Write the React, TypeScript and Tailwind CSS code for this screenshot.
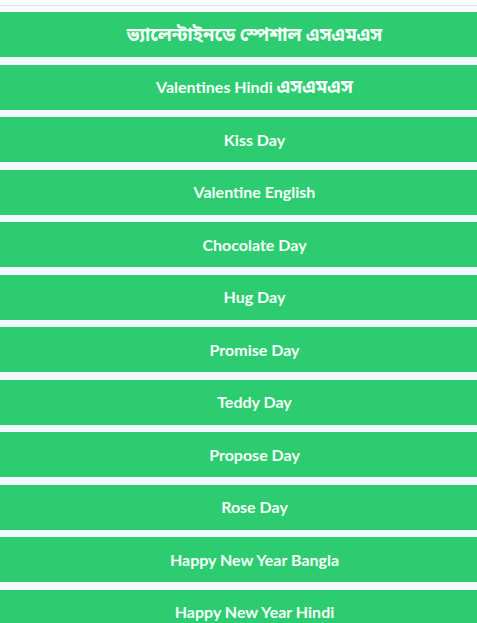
const items: { en?: string; bn?: string }[] = [
  { bn: 'ভ্যালেন্টাইনডে স্পেশাল এসএমএস' },
  { en: 'Valentines Hindi ', bn: 'এসএমএস' },
  { en: 'Kiss Day' },
  { en: 'Valentine English' },
  { en: 'Chocolate Day' },
  { en: 'Hug Day' },
  { en: 'Promise Day' },
  { en: 'Teddy Day' },
  { en: 'Propose Day' },
  { en: 'Rose Day' },
  { en: 'Happy New Year Bangla' },
  { en: 'Happy New Year Hindi' },
]

export default function App() {
  return (
    <main
      className="w-[477px] h-[623px] overflow-hidden bg-[#f2f9fc]"
      style={{ fontFamily: 'Lato, "Noto Sans Bengali", "Noto Sans", sans-serif' }}
    >
      <div className="h-[5px] bg-white" />
      <div className="h-px bg-[#dce3e8]" />
      <div className="h-[6px] bg-[#f7fbfd]" />
      <ul className="flex w-[509px] flex-col gap-[7.5px]">
        {items.map((item, index) => (
          <li
            key={index}
            className="flex h-[45px] shrink-0 items-center justify-center whitespace-pre bg-[#2ecc71] text-[16px] font-bold text-[#f4fff8]"
          >
            {item.en}
            {item.bn && <span className="text-[18.5px]">{item.bn}</span>}
          </li>
        ))}
      </ul>
    </main>
  )
}
